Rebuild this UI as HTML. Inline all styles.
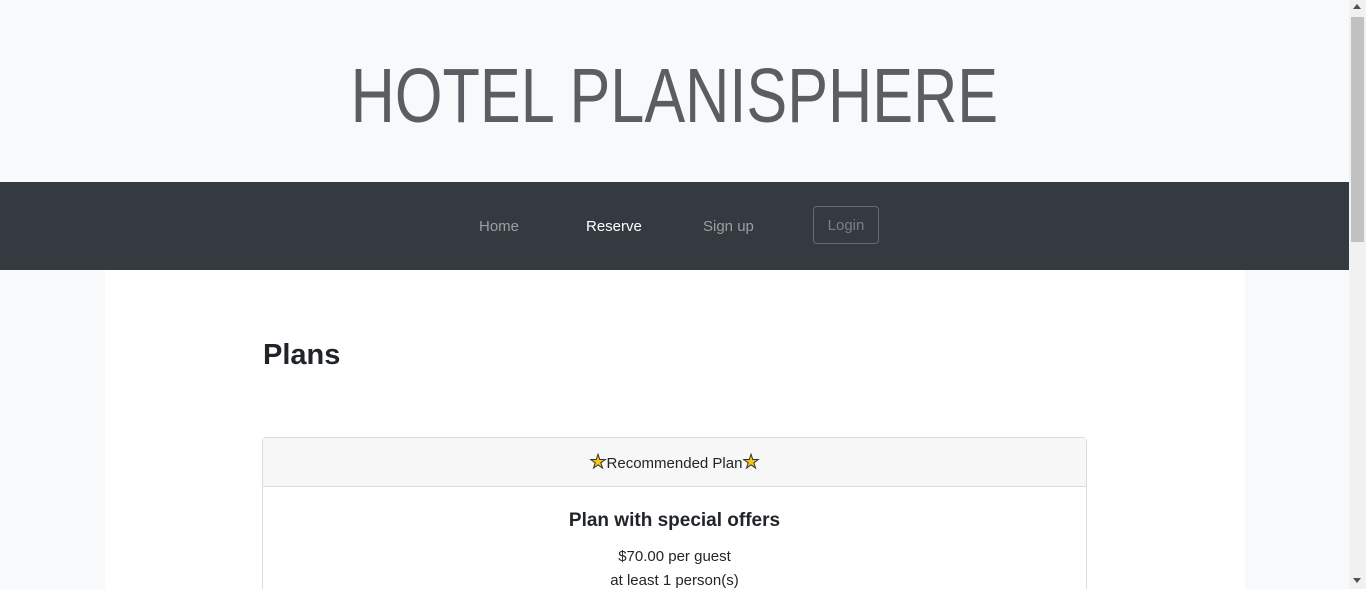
<!DOCTYPE html>
<html style="height:589px;overflow:hidden"><head><style>
html,body{margin:0;padding:0;}
body{width:1366px;height:589px;overflow:hidden;background:#f8f9fa;font-family:"Liberation Sans",sans-serif;color:#212529;position:relative;}
.hdr{position:absolute;left:0;top:0;width:1349px;height:182px;background:#f8f9fa;}
.hdr h1{margin:0;position:absolute;left:0;width:1349px;top:56px;text-align:center;font-weight:300;font-size:77px;line-height:80px;color:#5a5d61;transform:scaleX(0.795);transform-origin:674px 0;}
.nav{position:absolute;left:0;top:182px;width:1349px;height:88px;background:#343a40;}
.nav a{position:absolute;top:35px;font-size:15px;line-height:20px;color:rgba(255,255,255,.5);text-decoration:none;}
.login{position:absolute;left:813px;top:206px;width:64px;height:36px;border:1px solid rgba(255,255,255,.25);border-radius:4px;color:rgba(255,255,255,.35);font-size:15px;line-height:37px;text-align:center;}
.main{position:absolute;left:105px;top:270px;width:1140px;height:319px;background:#fff;overflow:hidden;}
.main h2{position:absolute;left:158px;top:67px;margin:0;font-size:29px;font-weight:bold;line-height:36px;}
.card{position:absolute;left:157px;top:167px;width:825px;height:152px;border:1px solid #dcdcdc;border-bottom:none;border-radius:4px 4px 0 0;box-sizing:border-box;}
.ch{height:48px;background:#f7f7f7;border-bottom:1px solid #dcdcdc;text-align:center;font-size:15px;line-height:50px;}
.card h5{margin:0;text-align:center;font-size:19px;font-weight:bold;line-height:24px;padding-top:22px;}
.card p{margin:12px 0 0;text-align:center;font-size:15px;line-height:24px;}
.star{color:#f5c518;font-size:19px;-webkit-text-stroke:1px #333;}
.sb{position:absolute;left:1349px;top:0;width:17px;height:589px;background:#f1f1f1;}
</style></head><body>
<div class="hdr"><h1>HOTEL PLANISPHERE</h1></div>
<div class="nav">
<a style="left:479px">Home</a>
<a style="left:586px;color:#fff">Reserve</a>
<a style="left:703px">Sign up</a>
</div>
<div class="login">Login</div>
<div class="main">
<h2>Plans</h2>
<div class="card">
<div class="ch"><span class="star">★</span>Recommended Plan<span class="star">★</span></div>
<h5>Plan with special offers</h5>
<p>$70.00 per guest<br>at least 1 person(s)</p>
</div>
</div>
<div class="sb">
<div style="position:absolute;left:2px;top:17px;width:13px;height:225px;background:#c1c1c1"></div>
<div style="position:absolute;left:4px;top:4px;width:0;height:0;border-left:4px solid transparent;border-right:4px solid transparent;border-bottom:5px solid #505050"></div>
<div style="position:absolute;left:4px;top:578px;width:0;height:0;border-left:4px solid transparent;border-right:4px solid transparent;border-top:5px solid #505050"></div>
</div>
</body></html>
